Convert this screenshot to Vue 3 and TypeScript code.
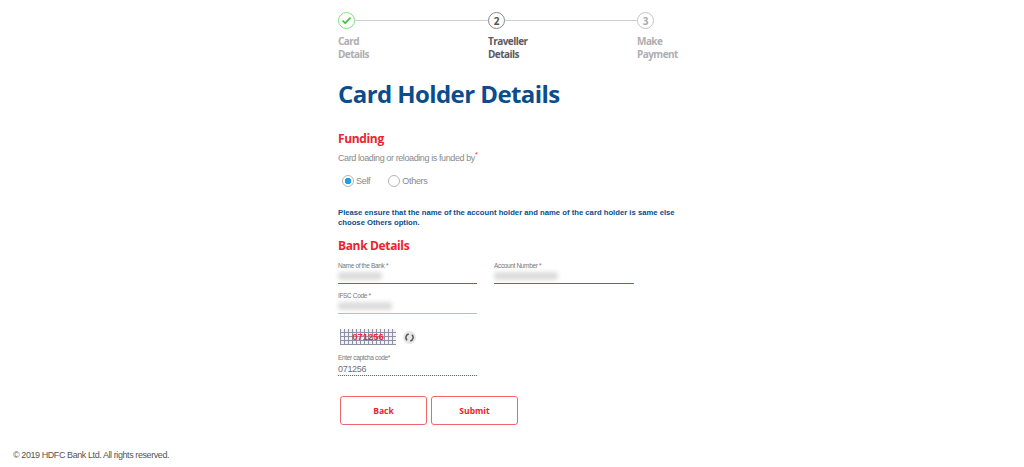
<script setup lang="ts">
interface Step { label: string[]; mark: string; state: string }
const steps: Step[] = [
  { label: ['Card', 'Details'], mark: '', state: 'done' },
  { label: ['Traveller', 'Details'], mark: '2', state: 'active' },
  { label: ['Make', 'Payment'], mark: '3', state: 'todo' },
]
</script>

<template>
  <div class="page">
    <main class="content">
      <ol class="stepper">
        <li v-for="s in steps" :key="s.state" class="step" :class="s.state">
          <div class="track">
            <span class="dot">
              <svg v-if="s.state === 'done'" width="11" height="9" viewBox="0 0 11 9">
                <path d="M1.5 4.5 4.2 7.2 9.5 1.6" fill="none" stroke="#3cc93c" stroke-width="1.7" />
              </svg>
              <template v-else>{{ s.mark }}</template>
            </span>
            <span class="line"></span>
          </div>
          <div class="step-label"><div v-for="l in s.label" :key="l">{{ l }}</div></div>
        </li>
      </ol>

      <h1>Card Holder Details</h1>

      <h2 class="funding">Funding</h2>
      <p class="question">Card loading or reloading is funded by<sup>*</sup></p>
      <div class="radios">
        <label class="radio"><span class="ring on"></span>Self</label>
        <label class="radio"><span class="ring"></span>Others</label>
      </div>

      <p class="notice">Please ensure that the name of the account holder and name of the card holder is same else choose Others option.</p>

      <h2 class="bank">Bank Details</h2>
      <div class="fields">
        <div class="field">
          <div class="flabel">Name of the Bank *</div>
          <div class="fvalue"><span class="smudge w1"></span></div>
        </div>
        <div class="field">
          <div class="flabel">Account Number *</div>
          <div class="fvalue"><span class="smudge w2"></span></div>
        </div>
        <div class="field">
          <div class="flabel">IFSC Code *</div>
          <div class="fvalue light"><span class="smudge w3"></span></div>
        </div>
      </div>

      <div class="captcha-row">
        <div class="captcha">071256</div>
        <span class="refresh">
          <svg width="9" height="9" viewBox="0 0 12 12">
            <path d="M5 1.3A4.8 4.8 0 0 0 2.8 9.6M7 10.7A4.8 4.8 0 0 0 9.2 2.4" fill="none" stroke="#555" stroke-width="2" />
          </svg>
        </span>
      </div>

      <div class="captcha-field">
        <div class="flabel">Enter captcha code*</div>
        <div class="cvalue">071256</div>
      </div>

      <div class="buttons">
        <button type="button">Back</button>
        <button type="button">Submit</button>
      </div>
    </main>
    <footer>© 2019 HDFC Bank Ltd. All rights reserved.</footer>
  </div>
</template>

<style>
html, body { margin: 0; background: #fff; }
</style>

<style scoped>
.page {
  height: 467px;
  overflow: hidden;
  font-family: "Liberation Sans", Arial, sans-serif;
  color: #777;
}
.content { width: 340px; margin-left: 338px; padding-top: 12px; }
.stepper {
  list-style: none;
  margin: 0;
  padding: 0;
  display: grid;
  grid-template-columns: 150px 149px 60px;
}
.track { display: flex; align-items: center; height: 17px; }
.dot {
  box-sizing: border-box;
  width: 17px;
  height: 17px;
  flex: none;
  border-radius: 50%;
  border: 1px solid #c4c4c4;
  display: flex;
  align-items: center;
  justify-content: center;
  font: 700 10px "Open Sans", sans-serif;
  color: #aaa;
}
.done .dot { border-color: #7be67b; }
.active .dot { border-color: #888; color: #555; }
.line { flex: 1; height: 1px; background: #cfcfcf; }
.todo .line { display: none; }
.step-label {
  margin-top: 6px;
  font: 700 10px/13px "Open Sans", sans-serif;
  letter-spacing: -0.55px;
  color: #aeaeb2;
}
.active .step-label { color: #5a5a66; }
h1 {
  margin: 16px 0 0;
  font: 700 24px/34px "Open Sans", sans-serif;
  letter-spacing: -0.58px;
  color: #0b4d8c;
}
h2 {
  margin: 0;
  font: 700 12px/18px "Open Sans", sans-serif;
  letter-spacing: -0.35px;
  color: #ed232e;
}
.funding { margin-top: 19px; }
.question {
  margin: 4px 0 0;
  font-size: 9px;
  letter-spacing: -0.4px;
  line-height: 13px;
  color: #8a8a8a;
}
.question sup { color: #ed232e; font-size: 7px; line-height: 0; }
.radios { display: flex; gap: 18px; margin: 9px 0 0 4px; height: 14px; }
.radio {
  display: flex;
  align-items: center;
  gap: 2px;
  font-size: 9px;
  letter-spacing: -0.3px;
  color: #888;
}
.ring {
  box-sizing: border-box;
  width: 12px;
  height: 12px;
  border: 1px solid #b4b4b4;
  border-radius: 50%;
  display: block;
}
.ring.on { background: radial-gradient(circle, #1a9fe8 0 3px, #fff 3.5px); }
.notice {
  margin: 20px 0 0;
  font-size: 7.7px;
  font-weight: 700;
  line-height: 9.5px;
  color: #0b4d8c;
}
.bank { margin-top: 10px; }
.fields {
  display: grid;
  grid-template-columns: 139px 140px;
  column-gap: 17px;
  row-gap: 7px;
  margin-top: 6px;
}
.flabel { font-size: 6.5px; letter-spacing: -0.35px; line-height: 9px; color: #777; }
.fvalue {
  height: 12px;
  padding-top: 1px;
  border-bottom: 1px solid #2f74b3;
}
.fvalue.light { border-bottom-color: #a3c3dd; }
.smudge {
  display: block;
  height: 8px;
  margin-top: 1px;
  background: #dcdcdc;
  filter: blur(2px);
  border-radius: 3px;
}
.w1 { width: 44px; }
.w2 { width: 64px; }
.w3 { width: 54px; }
.captcha-row { display: flex; align-items: center; gap: 7px; margin: 15px 0 0 2px; }
.captcha {
  width: 56px;
  height: 16px;
  text-align: center;
  font: 700 9.5px/16px "Liberation Sans", sans-serif;
  color: #f02a3c;
  background-color: #f1f1f6;
  background-image:
    repeating-linear-gradient(90deg, #8d90a3 0 1px, transparent 1px 4px),
    repeating-linear-gradient(0deg, #8d90a3 0 1px, transparent 1px 4px);
}
.refresh {
  width: 13px;
  height: 13px;
  border-radius: 50%;
  background: #e6e6e6;
  display: flex;
  align-items: center;
  justify-content: center;
}
.captcha-field { width: 139px; margin-top: 8px; }
.cvalue {
  font-size: 9px;
  line-height: 12px;
  letter-spacing: -0.3px;
  color: #707070;
  padding-top: 1px;
  border-bottom: 1px dotted #2f74b3;
}
.buttons { display: flex; gap: 4px; margin: 20px 0 0 2px; }
button {
  width: 87px;
  height: 29px;
  background: #fff;
  border: 1px solid #f0666c;
  border-radius: 3px;
  padding: 0;
  font: 700 8.5px "Open Sans", sans-serif;
  color: #ed232e;
}
footer {
  margin: 24px 0 0 13px;
  font-size: 9px;
  letter-spacing: -0.42px;
  line-height: 12px;
  color: #555;
}
</style>
